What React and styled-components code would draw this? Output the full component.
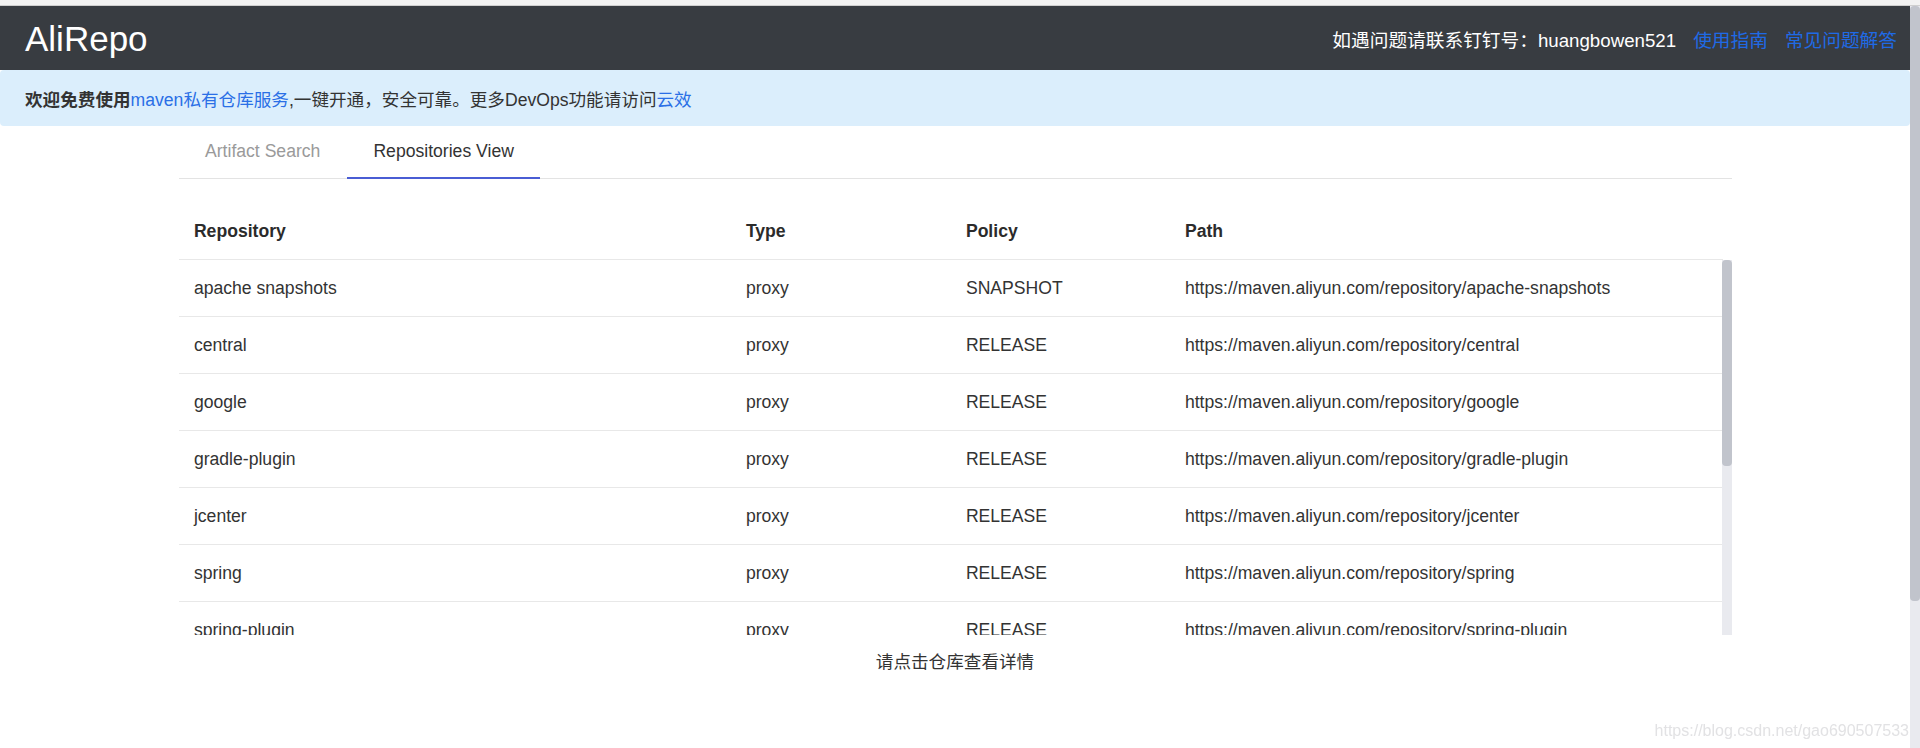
import React from 'react';
import styled, { createGlobalStyle } from 'styled-components';

const GlobalStyle = createGlobalStyle`
  html, body {
    margin: 0;
    height: 100%;
    overflow: hidden;
    background: #fff;
  }
  body {
    font-family: "Liberation Sans", Arial, "Noto Sans CJK SC", sans-serif;
    font-size: 17.6px;
    color: #333;
  }
  * {
    box-sizing: border-box;
  }
`;

const Frame = styled.div`
  height: 100vh;
  display: flex;
  flex-direction: column;
`;

const TopStrip = styled.div`
  height: 6px;
  flex: none;
  background: #f2f2f2;
  border-bottom: 1px solid #cfcfcf;
`;

const Window = styled.div`
  flex: 1;
  min-height: 0;
  display: flex;
`;

const Page = styled.div`
  flex: 1;
  min-width: 0;
  overflow: hidden;
`;

// drawn scrollbar (the headless browser hides native ones)
const Track = styled.div`
  flex: none;
  width: 10px;
  height: ${(p) => p.h || '100%'};
  background: #e9eaef;
`;

const Thumb = styled.div`
  height: ${(p) => p.h};
  background: #c1c4cc;
  border-radius: 4px;
`;

const Navbar = styled.header`
  height: 64px;
  background: #383c41;
  display: flex;
  align-items: center;
  justify-content: space-between;
  padding: 0 13px 0 25px;
`;

const Brand = styled.div`
  color: #fff;
  font-size: 35px;
  line-height: 1;
`;

const NavRight = styled.nav`
  display: flex;
  align-items: center;
  gap: 17px;
  font-size: 18.7px;
`;

const Contact = styled.span`
  color: #fff;
`;

const NavLink = styled.a`
  color: #1f6ae6;
  text-decoration: none;
`;

const Alert = styled.div`
  height: 56px;
  display: flex;
  align-items: center;
  padding: 0 25px;
  background: #dbeefc;
  border-radius: 4px;
  color: #333;
`;

const Strong = styled.b`
  font-weight: 700;
  color: #333;
`;

const AlertLink = styled.a`
  color: #2a6fe6;
  text-decoration: none;
`;

const Container = styled.main`
  width: 1553px;
  margin: 0 auto;
`;

const Tabs = styled.div`
  display: flex;
  border-bottom: 1px solid #e3e3e3;
`;

const Tab = styled.div`
  height: 53px;
  padding: 0 26.5px 1px;
  margin-bottom: -1px;
  display: flex;
  align-items: center;
  color: ${(p) => (p.active ? '#333' : '#9a9a9a')};
  border-bottom: 2px solid ${(p) => (p.active ? '#4a5dd4' : 'transparent')};
  cursor: pointer;
`;

const Table = styled.div`
  margin-top: 24px;
`;

const Row = styled.div`
  display: grid;
  grid-template-columns: 552px 220px 219px 1fr;
  height: 57px;
  align-items: center;
  border-bottom: 1px solid #e8e8e8;
  font-weight: ${(p) => (p.head ? 700 : 400)};
  color: ${(p) => (p.head ? '#2b2b2b' : '#333')};
  margin-right: ${(p) => (p.head ? '9px' : '0')};
  cursor: ${(p) => (p.head ? 'default' : 'pointer')};
`;

const Cell = styled.div`
  padding-left: 15.4px;
  white-space: nowrap;
`;

const BodyWrap = styled.div`
  display: flex;
`;

const Body = styled.div`
  flex: 1;
  min-width: 0;
  height: 375px;
  overflow: hidden;
`;

const Hint = styled.p`
  margin: 14px 0 0;
  text-align: center;
  line-height: 26px;
  color: #333;
`;

const Watermark = styled.div`
  position: fixed;
  right: 11px;
  bottom: 8px;
  font-size: 16px;
  color: #e2e2e4;
  pointer-events: none;
`;

const base = 'https://maven.aliyun.com/repository/';

const repos = [
  ['apache snapshots', 'proxy', 'SNAPSHOT', 'apache-snapshots'],
  ['central', 'proxy', 'RELEASE', 'central'],
  ['google', 'proxy', 'RELEASE', 'google'],
  ['gradle-plugin', 'proxy', 'RELEASE', 'gradle-plugin'],
  ['jcenter', 'proxy', 'RELEASE', 'jcenter'],
  ['spring', 'proxy', 'RELEASE', 'spring'],
  ['spring-plugin', 'proxy', 'RELEASE', 'spring-plugin'],
  ['public', 'group', 'RELEASE', 'public'],
  ['releases', 'hosted', 'RELEASE', 'releases'],
  ['snapshots', 'hosted', 'SNAPSHOT', 'snapshots'],
  ['grails-core', 'proxy', 'RELEASE', 'grails-core'],
  ['mapr-public', 'proxy', 'RELEASE', 'mapr-public'],
];

const App = () => (
  <Frame>
    <GlobalStyle />
    <TopStrip />
    <Window>
      <Page>
        <Navbar>
          <Brand>AliRepo</Brand>
          <NavRight>
            <Contact>如遇问题请联系钉钉号：huangbowen521</Contact>
            <NavLink href="#">使用指南</NavLink>
            <NavLink href="#">常见问题解答</NavLink>
          </NavRight>
        </Navbar>
        <Alert>
          <span>
            <Strong>欢迎免费使用</Strong>
            <AlertLink href="#">maven私有仓库服务</AlertLink>,一键开通，安全可靠。更多DevOps功能请访问
            <AlertLink href="#">云效</AlertLink>
          </span>
        </Alert>
        <Container>
          <Tabs>
            <Tab>Artifact Search</Tab>
            <Tab active>Repositories View</Tab>
          </Tabs>
          <Table>
            <Row head>
              <Cell>Repository</Cell>
              <Cell>Type</Cell>
              <Cell>Policy</Cell>
              <Cell>Path</Cell>
            </Row>
            <BodyWrap>
              <Body>
                {repos.map(([name, type, policy, path]) => (
                  <Row key={name}>
                    <Cell>{name}</Cell>
                    <Cell>{type}</Cell>
                    <Cell>{policy}</Cell>
                    <Cell>{base + path}</Cell>
                  </Row>
                ))}
              </Body>
              <Track h="375px">
                <Thumb h="206px" />
              </Track>
            </BodyWrap>
          </Table>
          <Hint>请点击仓库查看详情</Hint>
        </Container>
      </Page>
      <Track>
        <Thumb h="595px" />
      </Track>
    </Window>
    <Watermark>https://blog.csdn.net/gao690507533</Watermark>
  </Frame>
);

export default App;
